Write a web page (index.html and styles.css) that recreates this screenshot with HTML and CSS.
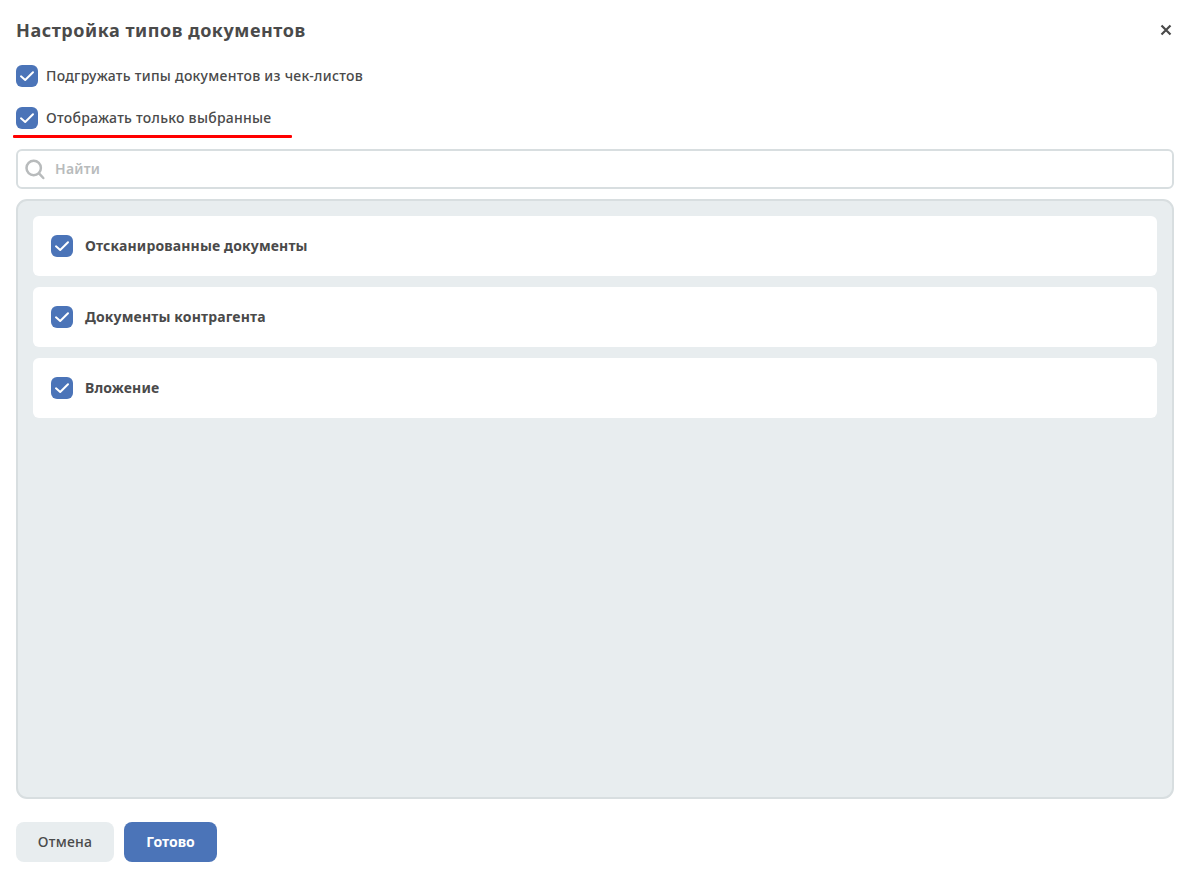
FILE: index.html
```
<!DOCTYPE html>
<html lang="ru">
<head>
    <meta charset="UTF-8">
    <meta name="viewport" content="width=device-width, initial-scale=1.0">
    <title>Настройка типов документов</title>
    <link rel="stylesheet" href="styles.css">
</head>
<body>
    <div class="modal">
        <div class="modal-header">
            <h2>Настройка типов документов</h2>
            <button class="close" aria-label="Закрыть">
                <svg width="12" height="12" viewBox="0 0 12 12"><path d="M1.5 1.5l9 9M10.5 1.5l-9 9"/></svg>
            </button>
        </div>
        <label class="option">
            <span class="checkbox"><svg viewBox="0 0 22 22"><path d="M5 11.3l4.2 3.7 7.8-7.8"/></svg></span>
            <span>Подгружать типы документов из чек-листов</span>
        </label>
        <label class="option marked">
            <span class="checkbox"><svg viewBox="0 0 22 22"><path d="M5 11.3l4.2 3.7 7.8-7.8"/></svg></span>
            <span>Отображать только выбранные</span>
        </label>
        <div class="search">
            <svg width="22" height="22" viewBox="0 0 22 22"><circle cx="8.7" cy="10" r="7.2"/><path d="M14 15.4l4.3 4.6"/></svg>
            <input type="text" placeholder="Найти">
        </div>
        <ul class="doc-list">
            <li>
                <span class="checkbox"><svg viewBox="0 0 22 22"><path d="M5 11.3l4.2 3.7 7.8-7.8"/></svg></span>
                <span>Отсканированные документы</span>
            </li>
            <li>
                <span class="checkbox"><svg viewBox="0 0 22 22"><path d="M5 11.3l4.2 3.7 7.8-7.8"/></svg></span>
                <span>Документы контрагента</span>
            </li>
            <li>
                <span class="checkbox"><svg viewBox="0 0 22 22"><path d="M5 11.3l4.2 3.7 7.8-7.8"/></svg></span>
                <span>Вложение</span>
            </li>
        </ul>
        <div class="modal-footer">
            <button class="btn">Отмена</button>
            <button class="btn btn-primary">Готово</button>
        </div>
    </div>
</body>
</html>
```
FILE: styles.css
```
* {
    box-sizing: border-box;
}
body {
    font-family: "Noto Sans", "Open Sans", sans-serif;
    font-size: 14px;
    font-weight: 500;
    line-height: 20px;
    letter-spacing: 0.26px;
    margin: 0;
    background-color: #ffffff;
    color: #4a4a4a;
}
.modal {
    height: 877px;
    padding: 16px 10px 15px 16px;
    display: flex;
    flex-direction: column;
}
.modal-header {
    height: 28px;
    display: flex;
    align-items: center;
    justify-content: space-between;
}
.modal-header h2 {
    margin: 0;
    font-size: 18px;
    line-height: 28px;
    font-weight: 700;
    letter-spacing: 0.54px;
}
.close {
    display: flex;
    padding: 0;
    margin-right: 2px;
    border: none;
    background: none;
    cursor: pointer;
}
.close svg {
    fill: none;
    stroke: #4a4a4a;
    stroke-width: 2.2;
}
.option {
    display: flex;
    align-items: center;
    align-self: flex-start;
    height: 22px;
    margin-top: 21px;
    gap: 8px;
    cursor: pointer;
}
.option + .option {
    margin-top: 20px;
}
.marked {
    position: relative;
}
.marked::after {
    content: "";
    position: absolute;
    left: -3px;
    top: 28px;
    width: 279px;
    height: 3px;
    border-radius: 1px;
    background-color: #ff0000;
}
.checkbox {
    width: 22px;
    height: 22px;
    border-radius: 6px;
    background-color: #4b74b8;
    flex-shrink: 0;
}
.checkbox svg {
    display: block;
    fill: none;
    stroke: #ffffff;
    stroke-width: 2;
    stroke-linecap: round;
    stroke-linejoin: round;
}
.search {
    display: flex;
    align-items: center;
    height: 40px;
    margin-top: 20px;
    padding: 0 7px;
    border: 2px solid #d8dee0;
    border-radius: 6px;
}
.search svg {
    fill: none;
    stroke: #b8bbbc;
    stroke-width: 2.5;
    stroke-linecap: round;
}
.search input {
    flex-grow: 1;
    margin-left: 8px;
    padding: 0;
    border: none;
    outline: none;
    font: inherit;
    font-weight: 600;
    letter-spacing: 0.25px;
}
.search input::placeholder {
    color: #b8bbbc;
    opacity: 1;
}
.doc-list {
    flex-grow: 1;
    margin: 10px 0 0;
    padding: 15px;
    list-style: none;
    border: 2px solid #d8dee0;
    border-radius: 11px;
    background-color: #e8edef;
}
.doc-list li {
    display: flex;
    align-items: center;
    height: 60px;
    margin-bottom: 11px;
    padding: 0 18px;
    gap: 12px;
    border-radius: 6px;
    background-color: #ffffff;
    font-weight: 700;
    letter-spacing: 0.14px;
}
.modal-footer {
    display: flex;
    gap: 10px;
    margin-top: 23px;
}
.btn {
    width: 98px;
    height: 40px;
    padding: 0;
    border: none;
    border-radius: 8px;
    background-color: #e8edef;
    color: #4a4a4a;
    font: inherit;
    letter-spacing: 0.25px;
    cursor: pointer;
}
.btn-primary {
    width: 93px;
    background-color: #4b74b8;
    color: #ffffff;
    font-weight: 700;
    letter-spacing: 0;
}
```
